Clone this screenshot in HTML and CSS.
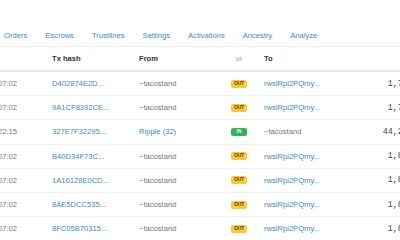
FILE: index.html
```html
<!DOCTYPE html>
<html lang="en">
<head>
  <meta charset="UTF-8">
  <meta name="viewport" content="width=device-width, initial-scale=1.0">
  <title>Account transactions</title>
  <link rel="stylesheet" href="styles.css">
</head>
<body>
  <div class="viewport">
    <nav class="tabs">
      <a class="tab">Orders</a>
      <a class="tab">Escrows</a>
      <a class="tab">Trustlines</a>
      <a class="tab">Settings</a>
      <a class="tab">Activations</a>
      <a class="tab">Ancestry</a>
      <a class="tab">Analyze</a>
    </nav>

    <div class="tx-table">
      <div class="row head">
        <div class="cell time"></div>
        <div class="cell">Tx hash</div>
        <div class="cell">From</div>
        <div class="cell dir">
          <svg class="swap-icon" viewBox="0 0 12 8" xmlns="http://www.w3.org/2000/svg">
            <path d="M1 2.5h9M8 0.8l2 1.7M11 5.5H2M4 7.2L2 5.5" fill="none" stroke="#999999" stroke-width="1.1"/>
          </svg>
        </div>
        <div class="cell">To</div>
        <div class="cell amount"></div>
      </div>

      <div class="row">
        <div class="cell time">2023-04-18 12:07:02</div>
        <div class="cell"><a class="link">D402874E2D...</a></div>
        <div class="cell muted">~tacostand</div>
        <div class="cell dir"><span class="badge out">out</span></div>
        <div class="cell"><a class="link">rwsiRpi2PQmy...</a></div>
        <div class="cell amount">1,750.00</div>
      </div>
      <div class="row">
        <div class="cell time">2023-04-18 12:07:02</div>
        <div class="cell"><a class="link">9A1CF8392CE...</a></div>
        <div class="cell muted">~tacostand</div>
        <div class="cell dir"><span class="badge out">out</span></div>
        <div class="cell"><a class="link">rwsiRpi2PQmy...</a></div>
        <div class="cell amount">1,750.00</div>
      </div>
      <div class="row">
        <div class="cell time">2023-04-18 11:22:15</div>
        <div class="cell"><a class="link">327E7F32295...</a></div>
        <div class="cell"><a class="link">Ripple (32)</a></div>
        <div class="cell dir"><span class="badge in">in</span></div>
        <div class="cell muted">~tacostand</div>
        <div class="cell amount">44,250.00</div>
      </div>
      <div class="row">
        <div class="cell time">2023-04-17 09:07:02</div>
        <div class="cell"><a class="link">B40D34F73C...</a></div>
        <div class="cell muted">~tacostand</div>
        <div class="cell dir"><span class="badge out">out</span></div>
        <div class="cell"><a class="link">rwsiRpi2PQmy...</a></div>
        <div class="cell amount">1,800.00</div>
      </div>
      <div class="row">
        <div class="cell time">2023-04-16 09:07:02</div>
        <div class="cell"><a class="link">1A16128E0CD...</a></div>
        <div class="cell muted">~tacostand</div>
        <div class="cell dir"><span class="badge out">out</span></div>
        <div class="cell"><a class="link">rwsiRpi2PQmy...</a></div>
        <div class="cell amount">1,800.00</div>
      </div>
      <div class="row">
        <div class="cell time">2023-04-15 09:07:02</div>
        <div class="cell"><a class="link">8AE5DCC535...</a></div>
        <div class="cell muted">~tacostand</div>
        <div class="cell dir"><span class="badge out">out</span></div>
        <div class="cell"><a class="link">rwsiRpi2PQmy...</a></div>
        <div class="cell amount">1,800.00</div>
      </div>
      <div class="row">
        <div class="cell time">2023-04-14 09:07:02</div>
        <div class="cell"><a class="link">8FC05B70315...</a></div>
        <div class="cell muted">~tacostand</div>
        <div class="cell dir"><span class="badge out">out</span></div>
        <div class="cell"><a class="link">rwsiRpi2PQmy...</a></div>
        <div class="cell amount">1,800.00</div>
      </div>
    </div>
  </div>
</body>
</html>
```

FILE: styles.css
```css
* {
  margin: 0;
  padding: 0;
  box-sizing: border-box;
}

body {
  background-color: #ffffff;
  width: 400px;
  height: 240px;
  overflow: hidden;
  font-family: "Liberation Sans", Arial, sans-serif;
  font-size: 7.6px;
  color: #333333;
}

/* page is scrolled sideways, so the left part sits off screen */
.viewport {
  width: 540px;
  margin-left: -60px;
  padding-top: 26px;
}

.tabs {
  display: flex;
  gap: 18px;
  height: 21px;
  line-height: 20px;
  padding-left: 64px;
  border-bottom: 1px solid #ececec;
}

.tab {
  color: #3a8cc4;
}

.tx-table {
  display: flex;
  flex-direction: column;
}

.row {
  display: grid;
  grid-template-columns: 112px 87px 92px 33px 76px 88px;
  align-items: center;
  height: 24.2px;
  border-bottom: 1px solid #efefef;
}

.row.head {
  height: 25px;
  border-bottom: 2px solid #e9e9e9;
  font-weight: bold;
}

.cell {
  white-space: nowrap;
  overflow: hidden;
  color: #777777;
}

.head .cell {
  color: #333333;
}

.cell.time {
  text-align: right;
  padding-right: 35px;
}

.cell.dir {
  display: flex;
  align-items: center;
}

.swap-icon {
  width: 8px;
  height: 6px;
  margin-left: 4px;
}

.cell.amount {
  text-align: right;
  font-family: "Liberation Mono", "Courier New", monospace;
  font-size: 8.4px;
  color: #444444;
}

.link {
  color: #3a8cc4;
}

.badge {
  display: inline-block;
  width: 16px;
  height: 8px;
  line-height: 8px;
  border-radius: 2px;
  text-align: center;
  text-transform: uppercase;
  font-size: 4.8px;
  font-weight: bold;
}

.badge.out {
  background-color: #fbc93c;
  color: #5e4400;
}

.badge.in {
  background-color: #35b158;
  color: #e8ffe8;
}
```
